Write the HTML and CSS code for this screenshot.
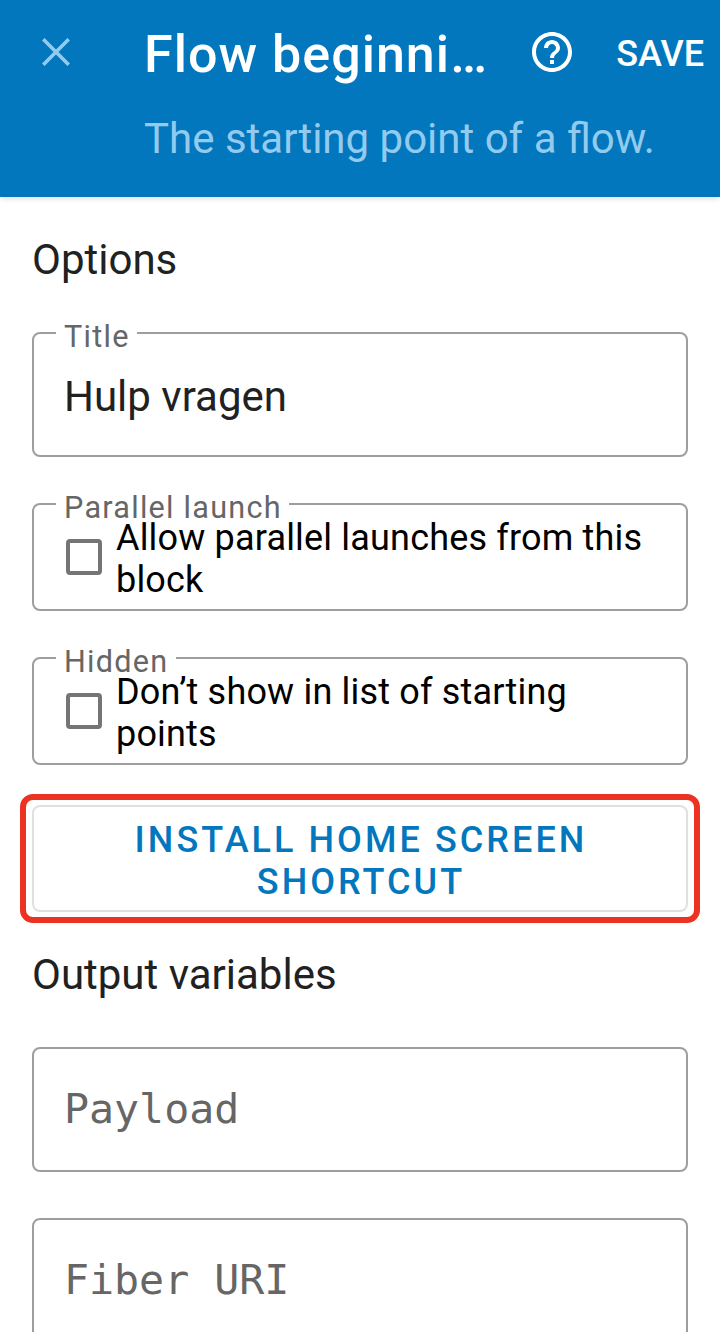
FILE: index.html
```
<!DOCTYPE html>
<html lang="en">
<head>
<meta charset="utf-8">
<title>Flow beginning</title>
<link rel="stylesheet" href="styles.css">
</head>
<body>
<div class="screen">
  <header class="appbar">
    <div class="appbar-row">
      <svg class="close" width="28" height="28" viewBox="0 0 28 28"><path d="M1.3 1.3L26.7 26.7M26.7 1.3L1.3 26.7"/></svg>
      <h1 class="heading">Flow beginni<span class="dots">…</span></h1>
      <svg class="help" width="48" height="48" viewBox="0 0 24 24"><path d="M11 18h2v-2h-2v2zm1-16C6.48 2 2 6.48 2 12s4.48 10 10 10 10-4.480 10-10S17.520 2 12 2zm0 18c-4.410 0-8-3.590-8-8s3.590-8 8-8 8 3.590 8 8-3.590 8-8 8zm0-14c-2.210 0-4 1.790-4 4h2c0-1.100.9-2 2-2s2 .9 2 2c0 2-3 1.750-3 5h2c0-2.250 3-2.500 3-5 0-2.210-1.790-4-4-4z"/></svg>
      <span class="save">SAVE</span>
    </div>
    <p class="subtitle">The starting point of a flow.</p>
  </header>
  <main class="content">
    <h2 class="section">Options</h2>
    <fieldset class="field field-title"><legend>Title</legend><div class="value">Hulp vragen</div></fieldset>
    <fieldset class="field field-check"><legend>Parallel launch</legend>
      <div class="check"><span class="box"></span><span class="label">Allow parallel launches from this<br>block</span></div></fieldset>
    <fieldset class="field field-check"><legend>Hidden</legend>
      <div class="check"><span class="box"></span><span class="label">Don’t show in list of starting<br>points</span></div></fieldset>
    <div class="highlight"><button class="install">INSTALL HOME SCREEN<br>SHORTCUT</button></div>
    <h2 class="section output">Output variables</h2>
    <div class="variable">Payload</div>
    <div class="variable">Fiber URI</div>
  </main>
</div>
</body>
</html>
```
FILE: styles.css
```
* { box-sizing: border-box; }
body { margin: 0; background: #fff; font-family: Roboto, "Liberation Sans", sans-serif; color: #212121; }
.screen { width: 720px; height: 1332px; overflow: hidden; }
.appbar { height: 197px; background: #0277bd; color: #fff; box-shadow: 0 1px 6px rgba(0,0,0,.16); }
.appbar-row { display: flex; align-items: center; height: 104px; padding: 0 16px 0 42px; }
.close { stroke: #93cbee; stroke-width: 3.6; fill: none; flex: none; }
.heading { margin: 0 0 0 74px; padding-top: 5px; width: 384px; font-size: 52px; font-weight: 500; line-height: 60px; letter-spacing: 1.02px; white-space: nowrap; }
.dots { letter-spacing: 0; }
.help { fill: #fff; flex: none; }
.save { margin-left: auto; padding-top: 3px; font-size: 36px; font-weight: 500; line-height: 42px; }
.subtitle { margin: 10px 0 0 144px; font-size: 42px; line-height: 50px; color: #93cbee; white-space: nowrap; }
.content { padding: 38px 32px 0; }
.section { margin: 0; font-size: 42px; font-weight: 400; line-height: 50px; }
.field { margin: 0; padding: 0 0 0 22px; border: 2px solid #9e9e9e; border-radius: 8px; min-width: 0; }
.field legend { padding: 0 7.5px 0 8px; height: 36px; font-size: 30.6px; line-height: 44px; letter-spacing: 1.25px; color: #666; white-space: nowrap; }
.field-title { height: 142px; margin-top: 30px; }
.value { padding: 21px 0 0 8px; font-size: 42px; line-height: 50px; }
.field-check { height: 125px; margin-top: 29px; }
.check { display: flex; align-items: center; gap: 14px; padding-left: 10px; margin-top: -5px; }
.box { width: 36px; height: 36px; margin-bottom: 4px; border: 4px solid #757575; border-radius: 4px; flex: none; }
.label { font-size: 36px; line-height: 42px; color: #000; letter-spacing: .18px; white-space: nowrap; }
.highlight { margin: 29px -12px 0; height: 129px; border: 6px solid #eb3223; border-radius: 13px; padding: 5px 6px; }
.install { width: 100%; height: 107px; border: 2px solid #e0e0e0; border-radius: 8px; background: #fff; color: #0277bd; font: 500 36px/42px Roboto, sans-serif; letter-spacing: 3.05px; padding: 4px 0 0 2px; }
.output { margin-top: 27px; }
.variable { height: 125px; border: 2px solid #9e9e9e; border-radius: 8px; padding: 32px 30px; font: 41.6px/56px "DejaVu Sans Mono", monospace; color: #666; margin-bottom: 46px; }
.output + .variable { margin-top: 47px; }
```
